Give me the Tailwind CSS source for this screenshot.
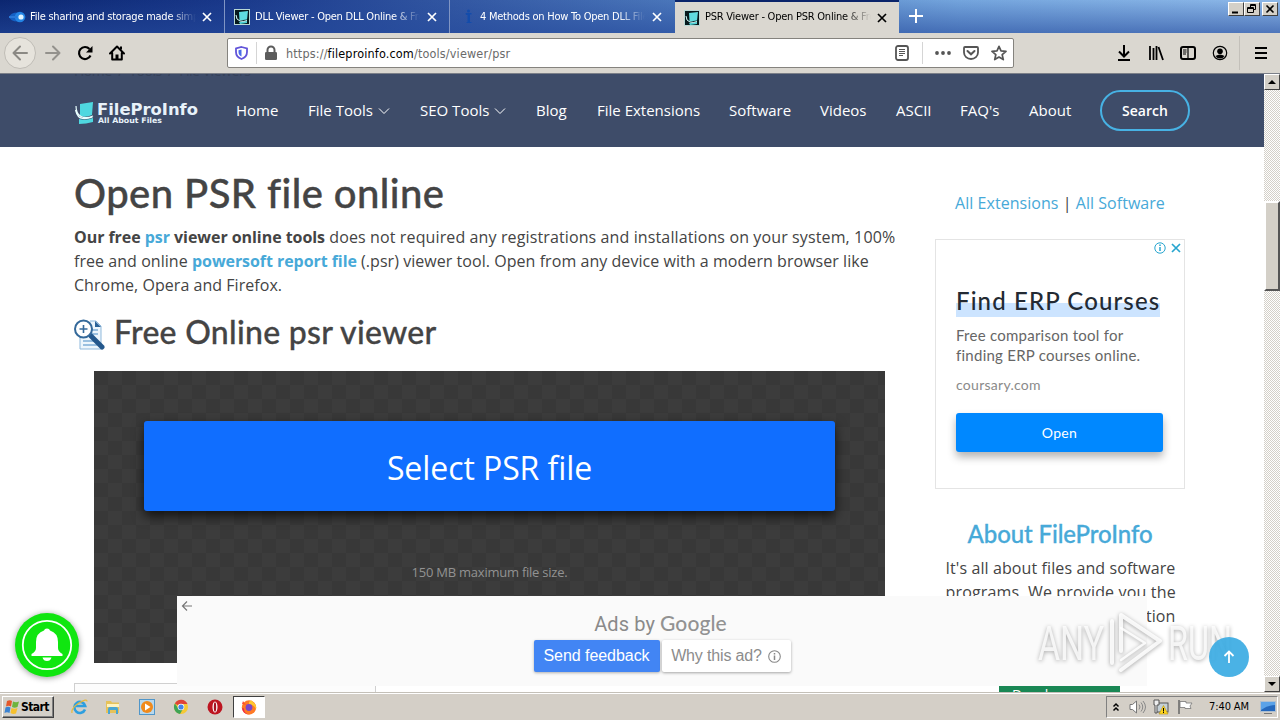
<!DOCTYPE html>
<html lang="en">
<head>
<meta charset="UTF-8">
<meta name="viewport" content="width=device-width, initial-scale=1.0">
<title>PSR Viewer - Open PSR Online &amp; Free</title>
<script src="https://cdn.jsdelivr.net/npm/@tailwindcss/browser@4"></script>
</head>
<body class="w-[1280px] h-[720px] overflow-hidden bg-white font-['Open_Sans',sans-serif] text-[#444444]">
<svg class="hidden">
  <symbol id="x" viewBox="0 0 10 10"><path d="M1 1l8 8M9 1L1 9" stroke="currentColor" stroke-width="1.7" fill="none"/></symbol>
  <symbol id="site" viewBox="0 0 16 16">
    <rect width="16" height="16" fill="#b9d8d4"/><rect x="1" y="1" width="14" height="14" fill="#06191c"/>
    <path d="M5 3l9-1-1 8.500-7.500 1z" fill="#5fdde0"/><path d="M5 13l8-1v2l-7 1z" fill="#4fd3d6"/><path d="M2 6q0 5 4 6t7-.5" stroke="#d6ffff" fill="none"/>
  </symbol>
</svg>

<div class="w-[1280px] h-[720px] flex flex-col">
  <!-- Tab strip -->
  <header class="relative h-[33px] shrink-0 flex bg-[linear-gradient(90deg,#0b2670_0%,#19388a_18%,#3358a3_36%,#5280c2_58%,#74a5dd_75%,#8db8e8_100%)] font-['DejaVu_Sans_Condensed',sans-serif] text-[11px] tracking-[-0.240px] text-white">
    <div class="absolute inset-0 bg-gradient-to-b from-transparent to-[#254a9c]/60"></div>
    <div class="relative w-[225px] h-[33px] flex items-center border-r border-[#8095c4] pl-2 pr-3">
      <svg class="w-[18px] h-4" viewBox="0 0 18 16"><ellipse cx="9.500" cy="8" rx="8" ry="4.500" fill="#1560c4"/><circle cx="12" cy="8" r="5.200" fill="#2384e4"/><circle cx="13" cy="8" r="2.600" fill="#e2f4ff"/><path d="M1 8h8" stroke="#2a78d8" stroke-width="2"/></svg>
      <span class="ml-1 pt-0.5 w-[166px] overflow-hidden whitespace-nowrap mask-r-from-84%">File sharing and storage made simple</span>
      <svg class="ml-auto w-2.5 h-2.5"><use href="#x"/></svg>
    </div>
    <div class="relative w-[225px] h-[33px] flex items-center border-r border-[#8095c4] pl-[9px] pr-3">
      <svg class="w-4 h-4"><use href="#site"/></svg>
      <span class="ml-[5px] pt-0.5 w-[165px] overflow-hidden whitespace-nowrap mask-r-from-84%">DLL Viewer - Open DLL Online &amp; Free</span>
      <svg class="ml-auto w-2.5 h-2.5"><use href="#x"/></svg>
    </div>
    <div class="relative w-[225px] h-[33px] flex items-center pl-[9px] pr-[13px]">
      <svg class="w-4 h-4" viewBox="0 0 16 16"><path d="M6.500 4h6v1.500h-1.500V13h1.500v1h-5v-1h1V6H7z" fill="#134cab"/><circle cx="9.500" cy="2" r="1.500" fill="#134cab"/></svg>
      <span class="ml-[5px] pt-0.5 w-[165px] overflow-hidden whitespace-nowrap mask-r-from-84%">4 Methods on How To Open DLL Files</span>
      <svg class="ml-auto w-2.5 h-2.5"><use href="#x"/></svg>
    </div>
    <div class="relative w-[224px] h-[33px] flex items-center border-t-2 border-[#0a246a] bg-[#dad7d0] text-black pl-[9px] pr-3">
      <svg class="w-4 h-4"><use href="#site"/></svg>
      <span class="ml-[5px] w-[166px] overflow-hidden whitespace-nowrap mask-r-from-84%">PSR Viewer - Open PSR Online &amp; Free</span>
      <svg class="ml-auto w-2.5 h-2.5"><use href="#x"/></svg>
    </div>
    <svg class="relative ml-[10px] mt-[9px] w-[14px] h-[14px]" viewBox="0 0 14 14"><path d="M7 0v14M0 7h14" stroke="#fff" stroke-width="2"/></svg>
    <div class="relative ml-auto mt-[2px] mr-[2px] flex h-[14px]">
      <svg class="w-4 h-[14px] bg-[#d4d0c8] border border-t-white border-l-white border-r-[#404040] border-b-[#404040]" viewBox="0 0 14 12"><path d="M3 9.500h6" stroke="#000" stroke-width="2"/></svg>
      <svg class="w-4 h-[14px] bg-[#d4d0c8] border border-t-white border-l-white border-r-[#404040] border-b-[#404040]" viewBox="0 0 14 12"><path d="M5.500 4V1.500h5v5H9M2.500 4.500h6v5h-6zM2.500 5.500h6M5.500 2.500h5" stroke="#000" fill="none"/></svg>
      <svg class="ml-0.5 w-4 h-[14px] bg-[#d4d0c8] border border-t-white border-l-white border-r-[#404040] border-b-[#404040]" viewBox="0 0 14 12"><path d="M3.500 2.500l7 7M10.500 2.500l-7 7" stroke="#000" stroke-width="1.600"/></svg>
    </div>
  </header>

  <!-- Toolbar -->
  <div class="h-[41px] shrink-0 flex items-center bg-[#dad7d0] border-b border-[#7b7f88] text-black">
    <div class="ml-1 w-8 h-8 rounded-full bg-[#e6e3dc] border border-[#bfbcb6] flex items-center justify-center">
      <svg class="w-4 h-4" viewBox="0 0 16 16"><path d="M15 8H1.500M8 1.500L1.500 8 8 14.500" stroke="#8b8984" stroke-width="2" fill="none" stroke-linecap="round" stroke-linejoin="round"/></svg>
    </div>
    <svg class="ml-[9px] w-4 h-4" viewBox="0 0 16 16"><path d="M1 8h13.500M8 1.500L14.500 8 8 14.500" stroke="#93918c" stroke-width="2" fill="none" stroke-linecap="round" stroke-linejoin="round"/></svg>
    <svg class="ml-4 w-4 h-4" viewBox="0 0 16 16"><path d="M13.500 10.500A6 6 0 1 1 12.500 4" stroke="#000" stroke-width="2.200" fill="none"/><path d="M15.500 1v6.500H9z"/></svg>
    <svg class="ml-4 w-4 h-4" viewBox="0 0 16 16"><path d="M1 8.500L8 1.500l7 7M3.200 8v6.500h9.600V8" stroke="#000" stroke-width="2" fill="none" stroke-linecap="round" stroke-linejoin="round"/><path d="M6.500 14V9.500h3V14z"/><path d="M11 1.500h2v3h-2z"/></svg>
    <div class="ml-[102px] w-[787px] h-[30px] bg-white border border-[#85837e] rounded-[2px] flex items-center">
      <svg class="ml-[7px] w-[13px] h-[14px]" viewBox="0 0 13 14"><path d="M6.500 1l5.500 1.500V6q0 5-5.500 7Q1 11 1 6V2.500z" stroke="#6254d9" stroke-width="1.800" fill="none"/><path d="M6.500 3.500v7Q3.500 9 3.500 6V4.300z" fill="#4a6ce8"/></svg>
      <div class="ml-2 w-px h-[22px] bg-[#d5d5d5]"></div>
      <svg class="ml-[7px] w-3.5 h-4" viewBox="0 0 14 16"><path d="M3.500 7.500V5a3.500 3.500 0 0 1 7 0v2.500" stroke="#5c5c5c" stroke-width="2" fill="none"/><rect x="1" y="7" width="12" height="8" rx="1.300" fill="#5c5c5c"/></svg>
      <span class="ml-[8px] pt-0.5 text-[12.500px] font-['DejaVu_Sans_Condensed',sans-serif] text-[#6a6a6a] tracking-[0.160px] whitespace-nowrap">https://<span class="text-black">fileproinfo.com</span>/tools/viewer/psr</span>
      <svg class="ml-auto w-3.5 h-4" viewBox="0 0 14 16"><rect x="1" y="1" width="12" height="14" rx="2" fill="none" stroke="#555" stroke-width="1.800"/><path d="M4 4.500h6M4 6.500h6M4 8.500h6M4 10.500h4" stroke="#555"/></svg>
      <div class="ml-[13px] w-px h-[22px] bg-[#d5d5d5]"></div>
      <svg class="ml-3 w-4 h-4" viewBox="0 0 16 16" fill="#555"><circle cx="2" cy="8" r="1.900"/><circle cx="8" cy="8" r="1.900"/><circle cx="14" cy="8" r="1.900"/></svg>
      <svg class="ml-3 w-4 h-4" viewBox="0 0 16 16" fill="none" stroke="#555" stroke-width="1.800"><path d="M2 2h12q1 0 1 1v4.500a7 6.500 0 0 1-14 0V3q0-1 1-1z"/><path d="M4.500 6L8 9.300 11.500 6" stroke-width="2" stroke-linecap="round"/></svg>
      <svg class="ml-3 mr-[6px] w-4 h-4" viewBox="0 0 16 16"><path d="M8 1.300l2 4.600 5 .5-3.800 3.300 1.100 4.900L8 12l-4.300 2.600 1.100-4.900L1 6.400l5-.5z" fill="none" stroke="#555" stroke-width="1.700" stroke-linejoin="round"/></svg>
    </div>
    <svg class="ml-[102px] w-4 h-4" viewBox="0 0 16 16"><path d="M8 0v11M3 6.500l5 5 5-5M2 15h12" stroke="#000" stroke-width="2" fill="none"/></svg>
    <svg class="ml-4 w-4 h-4" viewBox="0 0 16 16"><path d="M2 1v14M5.500 3v12M8.500 1v14M10.500 2l4.500 13" stroke="#000" stroke-width="1.800" fill="none"/></svg>
    <svg class="ml-4 w-4 h-4" viewBox="0 0 16 16"><rect x="1" y="2" width="14" height="12" rx="2" stroke="#000" stroke-width="2" fill="none"/><path d="M8 2v12M3 5h3.500M3 7h3.500M3 9h3" stroke="#000" stroke-width="1.200"/></svg>
    <svg class="ml-4 w-4 h-4" viewBox="0 0 16 16"><circle cx="8" cy="8" r="6.700" fill="none" stroke="#000" stroke-width="1.200"/><circle cx="8" cy="6.300" r="2.800"/><path d="M3.500 11q4.500-3 9 0-1.500 2.500-4.500 2.500T3.500 11z"/></svg>
    <div class="ml-[11px] w-px h-[34px] bg-[#c3c0ba]"></div>
    <svg class="ml-[14px] w-3.5 h-3.5" viewBox="0 0 14 14"><path d="M1 2h12M1 7h12M1 12h12" stroke="#000" stroke-width="2"/></svg>
  </div>

  <!-- Page -->
  <div class="relative h-[618px] flex overflow-hidden">
    <div class="relative w-[1264px] h-[618px] overflow-hidden bg-white">
      <nav class="relative h-[73px] bg-[#3e4c69] flex items-center text-[15px] text-white whitespace-nowrap">
        <div class="absolute left-[74px] -top-[13px] text-[14px] leading-5 text-[#354159] tracking-[-0.450px]">Home &nbsp;/&nbsp; Tools &nbsp;/&nbsp; File Viewers</div>
        <svg class="ml-[74px] w-[125px] h-[26px] mt-1" viewBox="0 0 125 26" font-family="DejaVu Sans, sans-serif" font-weight="bold" fill="#e8f2fa">
          <path d="M6 4l13-2-1 13q-6 3-12 1z" fill="#4fd8e0"/><path d="M5 19q7 2 14-1v4q-7 2-14 2z" fill="#4fd8e0"/><path d="M2 6q0 8 5 10.500t12-.5M1.500 10q2 8 7 8.500t10-1.500" stroke="#eaffff" stroke-width="1.200" fill="none"/>
          <text x="23" y="14.500" font-size="15" textLength="101" lengthAdjust="spacingAndGlyphs">FileProInfo</text>
          <text x="24" y="22.500" font-size="7.500" textLength="64" lengthAdjust="spacingAndGlyphs">All About Files</text>
        </svg>
        <div class="w-[72px] ml-[37px]">Home</div>
        <div class="w-[112px] flex items-center">File Tools<svg class="ml-[5px] w-3 h-3" viewBox="0 0 12 12"><path d="M1 3.500l5 5 5-5" stroke="#fff" fill="none"/></svg></div>
        <div class="w-[116px] flex items-center">SEO Tools<svg class="ml-[5px] w-3 h-3" viewBox="0 0 12 12"><path d="M1 3.500l5 5 5-5" stroke="#fff" fill="none"/></svg></div>
        <div class="w-[61px]">Blog</div>
        <div class="w-[132px]">File Extensions</div>
        <div class="w-[91px]">Software</div>
        <div class="w-[76px]">Videos</div>
        <div class="w-16">ASCII</div>
        <div class="w-[69px]">FAQ's</div>
        <div class="w-[71px]">About</div>
        <div class="w-[90px] h-[41px] rounded-full border-2 border-[#47b2e4] flex items-center justify-center text-[14px] font-semibold">Search</div>
      </nav>

      <div class="flex pl-[74px]">
        <main class="w-[831px] shrink-0 whitespace-nowrap">
          <h1 class="mt-[22px] h-12 leading-[48px] text-[40px] font-medium font-['Lato',sans-serif] tracking-[0.430px] [-webkit-text-stroke:0.4px_#444]">Open PSR file online</h1>
          <div class="mt-[8px] text-[16px] leading-6">
            <div class="tracking-[0.120px]"><b class="tracking-[-0.050px]">Our free <span class="text-[#47a9d8]">psr</span> viewer online tools</b> does not required any registrations and installations on your system, 100%</div>
            <div class="tracking-[0.050px]">free and online <b class="text-[#47a9d8] tracking-[-0.060px]">powersoft report file</b> (.psr) viewer tool. Open from any device with a modern browser like</div>
            <div class="tracking-[0.040px]">Chrome, Opera and Firefox.</div>
          </div>
          <h2 class="mt-4 h-[38px] flex items-center text-[32px] font-medium font-['Lato',sans-serif] tracking-[0.270px] [-webkit-text-stroke:0.3px_#444]">
            <svg class="w-[31px] h-[31px] mt-1 mr-[9px]" viewBox="0 0 31 31"><path d="M6 15v15h21V7l-5-5h-6" fill="#edf6fc" stroke="#8fb9dc"/><path d="M21 2v6h6z" fill="#2b6398"/><path d="M9 22h13M9 26h14M18 15h6M18 11h6" stroke="#7faed6" stroke-width="1.500"/><path d="M17 17l11 11" stroke="#24588c" stroke-width="5" stroke-linecap="round"/><circle cx="9.500" cy="10" r="8.500" fill="#fff" stroke="#34699a" stroke-width="2"/><path d="M9.500 6v8M5.500 10h8" stroke="#34699a" stroke-width="1.600"/></svg>
            Free Online psr viewer
          </h2>
          <div class="mt-[20px] ml-5 w-[791px] h-[292px] pt-[50px] px-[50px] bg-[#383838] bg-[conic-gradient(#3c3c3c_25%,#383838_0_50%,#3c3c3c_0_75%,#383838_0)] bg-[length:28px_28px]">
            <div class="h-[90px] rounded-[3px] bg-[#106eff] shadow-[0_5px_12px_rgba(0,0,0,0.7)] flex items-center justify-center pt-1 text-[32px] tracking-[-0.080px] text-white">Select PSR file</div>
            <div class="mt-[51px] text-center text-[13px] leading-5 tracking-[-0.240px] text-[#929292]">150 MB maximum file size.</div>
          </div>
          <div class="mt-5 w-[302px] h-10 border border-[#d0d0d0] bg-[#fcfcfc]"></div>
        </main>

        <aside class="w-[310px] flex flex-col items-center whitespace-nowrap">
          <div class="mt-[44px] text-[16px] leading-6 tracking-[0.040px]"><span class="text-[#47a9d8]">All Extensions</span> | <span class="text-[#47a9d8]">All Software</span></div>
          <div class="relative mt-6 w-[250px] h-[250px] border border-[#e4e4e4] pl-5 pt-[47px] font-['Lato',sans-serif]">
            <div class="absolute top-[2px] right-[2px] flex gap-1 text-[#27a5cf]">
              <svg class="w-3 h-3" viewBox="0 0 12 12"><circle cx="6" cy="6" r="5.200" fill="none" stroke="currentColor"/><path d="M6 5v4M6 2.500v1.500" stroke="currentColor" stroke-width="1.500"/></svg>
              <svg class="w-3 h-3 p-px"><use href="#x"/></svg>
            </div>
            <div class="w-[204px] h-[30px] leading-[28px] bg-[linear-gradient(transparent_52%,#cce4ff_52%)] text-[24px] font-medium text-[#232a33] tracking-[1.120px]">Find ERP Courses</div>
            <div class="mt-[8px] text-[15px] leading-5 text-[#666] tracking-[0.250px]">Free comparison tool for<br>finding ERP courses online.</div>
            <div class="mt-[10px] text-[14px] leading-5 text-[#8a8a8a] tracking-[0.280px]">coursary.com</div>
            <div class="mt-[18px] w-[207px] h-[39px] rounded-[3px] bg-[#0088ff] shadow-[0_5px_9px_rgba(0,0,0,0.3)] flex items-center justify-center text-[14px] tracking-[0.300px] text-white">Open</div>
          </div>
          <h3 class="mt-[30px] text-[24px] leading-[30px] font-medium font-['Lato',sans-serif] text-[#47a9d8] tracking-[-0.100px] [-webkit-text-stroke:0.3px_#47a9d8]">About FileProInfo</h3>
          <div class="mt-[7px] w-[231px] pl-px text-[16px] leading-6 tracking-[0.100px]">
            <div>It's all about files and software</div>
            <div class="tracking-[0.160px]">programs. We provide you the</div>
            <div class="text-right">best information</div>
          </div>
          <div class="mt-[58px] w-[121px] h-9 ml-[-1px] bg-[#198754] pl-[13px] text-[14px] leading-[17px] text-white">Developer</div>
        </aside>
      </div>

      <!-- Closed ad bar -->
      <div class="absolute left-[177px] top-[522px] w-[970px] h-[90px] bg-[#fafafa] font-['Liberation_Sans',sans-serif]">
        <svg class="absolute left-1 top-1 w-3 h-3" viewBox="0 0 12 12"><path d="M11 6H1.500M6 1.500L1.500 6 6 10.500" stroke="#777" stroke-width="1.200" fill="none"/></svg>
        <div class="flex flex-col items-center pt-[13px]">
          <div class="-ml-[3px] h-[27px] leading-[27px] text-[20px] text-[#8a8a8a] font-['Roboto',sans-serif] tracking-[0.100px]">Ads by <span class="text-[21px] font-medium font-['Lato',sans-serif] text-[#929292]">Google</span></div>
          <div class="mt-1 flex gap-0.5 text-[16px] tracking-[-0.050px]">
            <div class="w-[126px] h-8 rounded-[2px] bg-[#4285f4] text-white flex items-center justify-center shadow-[0_1px_3px_rgba(0,0,0,0.3)]">Send feedback</div>
            <div class="w-[129px] h-8 rounded-[2px] bg-white text-[#8c8c8c] flex items-center justify-center shadow-[0_1px_3px_rgba(0,0,0,0.35)] tracking-[-0.150px]">Why this ad?<svg class="ml-1.5 w-[13px] h-[13px]" viewBox="0 0 13 13"><circle cx="6.500" cy="6.500" r="5.800" fill="none" stroke="#888" stroke-width="1.100"/><path d="M6.500 5.500v4.500M6.500 3v1.500" stroke="#888" stroke-width="1.500"/></svg></div>
          </div>
        </div>
      </div>

      <!-- Notification bell -->
      <div class="absolute left-[15px] top-[539px] w-16 h-16 rounded-full bg-[#10e610] shadow-[0_1px_6px_rgba(0,0,0,0.4)]">
        <svg class="w-16 h-16" viewBox="0 0 64 64"><circle cx="32" cy="32" r="24.200" fill="none" stroke="#fff" stroke-width="1.800"/><path d="M32 15.500q2.500 0 3 2 8 2.500 8 11.500v6q0 3.500 4.500 6v2h-31v-2q4.500-2.500 4.500-6v-6q0-9 8-11.500.500-2 3-2zM27.500 44.500h9q-1 3.500-4.500 3.500t-4.500-3.500z" fill="#fff"/></svg>
      </div>

      <!-- Watermark -->
      <svg class="absolute left-[1030px] top-[529px] w-[220px] h-[76px] drop-shadow-[0_1px_2px_rgba(0,0,0,0.4)]" viewBox="0 0 220 76" font-family="Roboto, sans-serif" font-size="49" fill="#fff" fill-opacity=".8">
        <text x="8" y="57" textLength="66" lengthAdjust="spacingAndGlyphs">ANY</text>
        <text x="138" y="57" textLength="64" lengthAdjust="spacingAndGlyphs">RUN</text>
        <g fill="none" stroke="#fff" stroke-opacity=".85" stroke-width="4" stroke-linejoin="round" stroke-linecap="round"><path d="M82 60V18M91 48V12l39 26-39 29"/><path d="M91 25l24 15-24 17" stroke-width="2.500"/></g>
      </svg>

      <!-- Back to top -->
      <div class="absolute left-[1209px] top-[563px] w-10 h-10 rounded-full bg-[#36aae2]/90 flex items-center justify-center">
        <svg class="w-3.5 h-3.5" viewBox="0 0 14 14"><path d="M7 13V1.500M2.500 6L7 1.500 11.500 6" stroke="#fff" stroke-width="1.800" fill="none"/></svg>
      </div>
    </div>

    <!-- Scrollbar -->
    <div class="w-4 h-[618px] flex flex-col bg-[repeating-conic-gradient(#fff_0_25%,#d4d0c8_0_50%)] bg-[length:2px_2px]">
      <svg class="w-4 h-4 bg-[#d4d0c8] border border-t-white border-l-white border-r-[#404040] border-b-[#404040]" viewBox="0 0 14 14"><path d="M3 9h8L7 5z"/></svg>
      <div class="mt-[111px] h-[90px] bg-[#d4d0c8] border-2 border-t-white border-l-white border-r-[#555] border-b-[#555]"></div>
      <svg class="mt-auto w-4 h-4 bg-[#d4d0c8] border border-t-white border-l-white border-r-[#404040] border-b-[#404040]" viewBox="0 0 14 14"><path d="M3 5h8L7 9z"/></svg>
    </div>
  </div>

  <!-- Taskbar -->
  <footer class="h-7 shrink-0 flex items-center bg-[#d4cfc7] border-t border-[#c4c0b8] font-['DejaVu_Sans_Condensed',sans-serif] text-black shadow-[inset_0_1px_0_#fff]">
    <div class="ml-[2px] w-[52px] h-[22px] mt-px flex items-center bg-[#d4d0c8] border border-t-white border-l-white border-r-[#404040] border-b-[#404040] shadow-[inset_-1px_-1px_0_#808080] pl-px text-[12px] font-bold tracking-[-0.550px]">
      <svg class="w-4 h-4 mr-px" viewBox="0 0 16 16"><path d="M3 2q3-1.500 5 0L7 7.500q-2.500-1.500-5 0z" fill="#e5582a"/><path d="M9 2.500q3 1.500 6 0L13.500 8q-3 1.500-5.500 0z" fill="#6eb43c"/><path d="M1.500 8.500q2.500-1.500 5 0L5.500 14q-2.500-1.500-5 0z" fill="#3c83d1"/><path d="M7.500 9q3 1.500 6 0L12 14.500q-3 1-5.500-.5z" fill="#f6c02c"/></svg>Start
    </div>
    <svg class="ml-[17px] w-[17px] h-4" viewBox="0 0 17 16"><path d="M14 10.500A5.500 5.500 0 1 1 14.200 7H5" stroke="#2e9fdf" stroke-width="2.600" fill="none"/><path d="M1 14Q0 9 8 4t8-1.500" stroke="#e9b93a" stroke-width="1.200" fill="none"/></svg>
    <svg class="ml-[17px] w-4 h-4" viewBox="0 0 16 16"><path d="M1 2h5l1 1.500h7V14H1z" fill="#e6c25a"/><path d="M2 5h12v3H2z" fill="#fff3bf"/><path d="M3 15v-5q0-2 2-2h6q2 0 2 2v5h-2v-4H5v4z" fill="#4aa6d2"/></svg>
    <svg class="ml-[18px] w-4 h-4" viewBox="0 0 16 16"><rect x=".5" y=".5" width="15" height="15" fill="#b8d8ed" stroke="#5096c9"/><circle cx="8" cy="8" r="6" fill="#f08a1c"/><path d="M6 4.500v7L11.500 8z" fill="#fff"/></svg>
    <svg class="ml-[18px] w-4 h-4" viewBox="0 0 16 16"><circle cx="8" cy="8" r="7" fill="#f5c934"/><path d="M8 8L1.900 4.500A7 7 0 0 1 14.500 5H8z" fill="#df4338"/><path d="M1.900 4.500A7 7 0 0 0 7 15l3.500-6H5z" fill="#3fa456"/><circle cx="8" cy="8" r="3.300" fill="#fff"/><circle cx="8" cy="8" r="2.600" fill="#4484e8"/></svg>
    <svg class="ml-[18px] w-4 h-4" viewBox="0 0 16 16"><circle cx="8" cy="8" r="7.500" fill="#bd1520"/><ellipse cx="8" cy="8" rx="2.500" ry="5.500" fill="#fff"/><ellipse cx="8" cy="8" rx="1.200" ry="4.800" fill="#a51220"/></svg>
    <div class="ml-[10px] w-8 h-[22px] mt-px flex items-center justify-center bg-white border border-t-[#404040] border-l-[#404040] border-r-white border-b-white">
      <svg class="w-4 h-4" viewBox="0 0 16 16"><circle cx="8" cy="8.500" r="7.200" fill="#ff7a25"/><path d="M8 3q2-3 4 0 4 3 3 7-3-5-7-4z" fill="#ffc82e"/><path d="M1 5l1-3 2 3 3 1z" fill="#ff4a2e"/><circle cx="8" cy="8.500" r="3.400" fill="#7a47c8"/><path d="M1 9q1 6 7 6.500-5-1-5-6z" fill="#f0274d"/></svg>
    </div>
    <div class="ml-auto mr-[2px] w-[172px] h-[22px] mt-px flex items-center border border-t-[#808080] border-l-[#808080] border-r-white border-b-white text-[11px] whitespace-nowrap">
      <svg class="ml-[5px] w-2 h-2.5" viewBox="0 0 8 10"><path d="M1.500 4.500L4 2l2.500 2.500M1.500 8.500L4 6l2.500 2.500" stroke="#000" stroke-width="1.500" fill="none"/></svg>
      <svg class="ml-[9px] w-[17px] h-4" viewBox="0 0 17 16"><path d="M1 5.500h2.500L7.500 2v12l-4-3.500H1z" fill="#fff" stroke="#777"/><path d="M10 5.500q2 2.500 0 5M12 3.500q3.500 4.500 0 9M14 2q5 6 0 12" stroke="#888" fill="none"/></svg>
      <svg class="ml-[7px] w-4 h-4" viewBox="0 0 16 16"><rect x="3" y="4" width="12" height="9" fill="#c5d0d6" stroke="#555"/><path d="M1 1h5v5H4v8H2V6H1z" fill="#eee" stroke="#555"/><path d="M10.500 6.500l4.500 8.500H6z" fill="#ffd620" stroke="#b29016" stroke-width=".6"/><path d="M10.500 9v3.500M10.500 13v1" stroke="#000"/></svg>
      <svg class="ml-[8px] w-4 h-4" viewBox="0 0 16 16"><path d="M2 1v14" stroke="#666" stroke-width="1.500"/><path d="M3 2.500h6v1.500h6l-2 3 1 2.500H8V8.500H3z" fill="#fff" stroke="#777" stroke-width=".8"/></svg>
      <span class="ml-[16px] tracking-[-0.100px]">7:40 AM</span>
      <svg class="ml-auto mr-px w-4 h-4" viewBox="0 0 16 16"><rect x=".5" y="2.500" width="15" height="10" fill="#2468bd" stroke="#aebfd0"/><path d="M1 3h14v3Q8 6 1 11z" fill="#5aa2e8"/><path d="M4 14.500h8" stroke="#777"/></svg>
    </div>
  </footer>
</div>
</body>
</html>
